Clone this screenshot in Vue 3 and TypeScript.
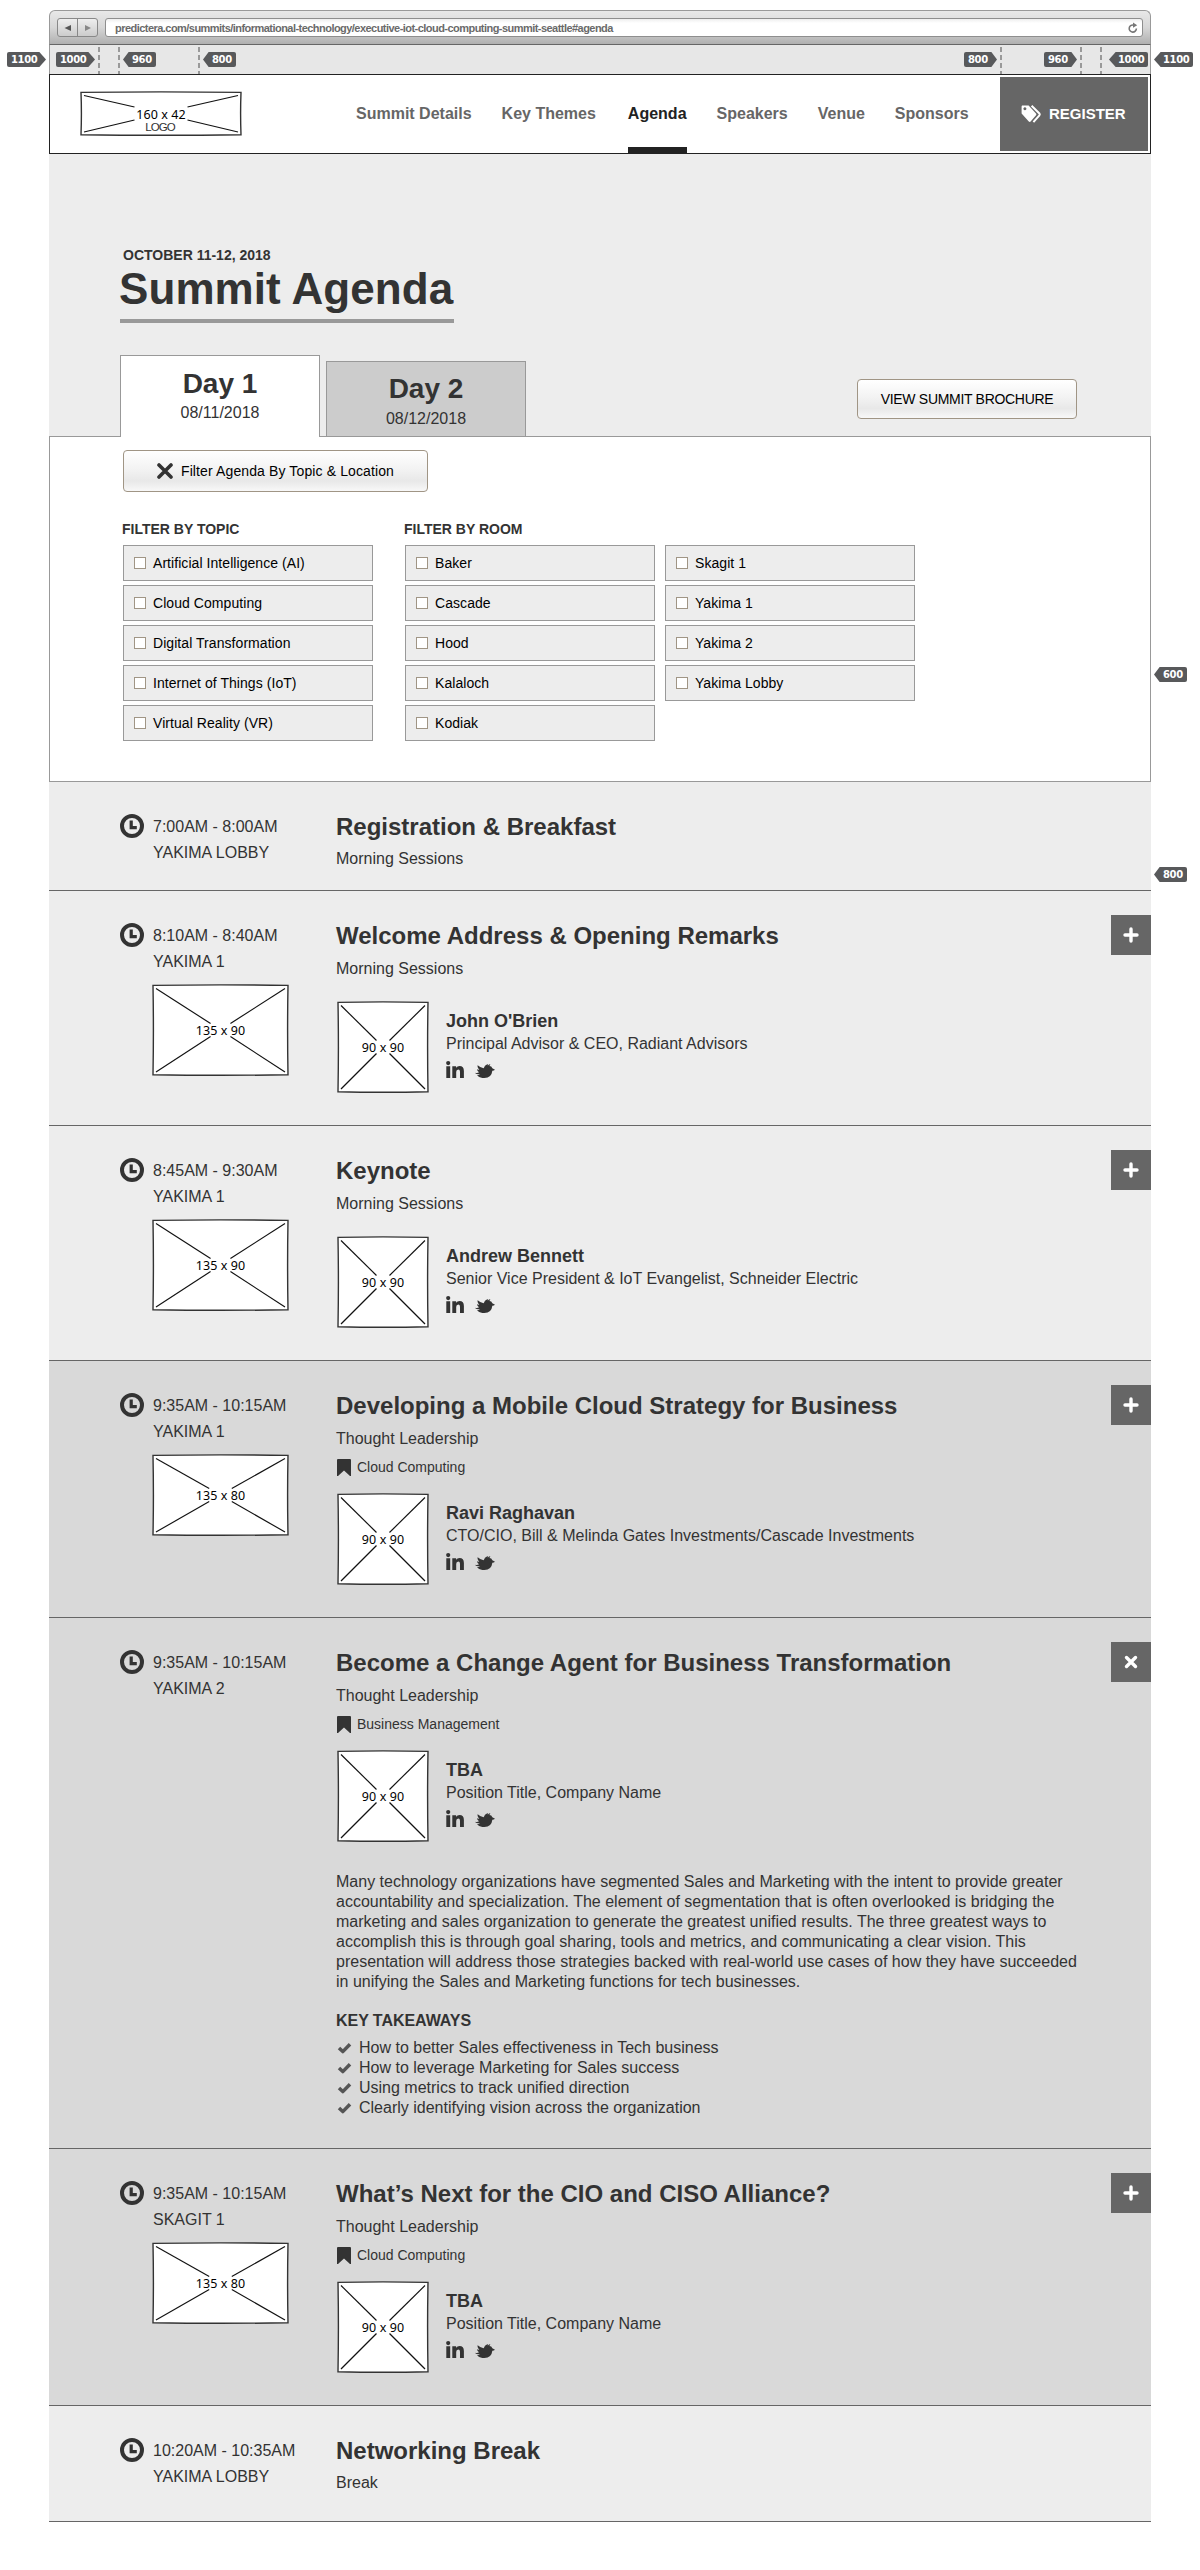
<script setup lang="ts">
import { h, type FunctionalComponent } from 'vue'

interface Speaker {
  name: string
  role: string
}
interface Session {
  time: string
  room: string
  title: string
  track: string
  topic?: string
  image?: { h: number; label: string }
  speaker?: Speaker
  toggle?: 'plus' | 'close'
  shaded?: boolean
  height: number
  body?: string[]
  takeaways?: string[]
}

const nav = ['Summit Details', 'Key Themes', 'Agenda', 'Speakers', 'Venue', 'Sponsors']

const topics = [
  'Artificial Intelligence (AI)',
  'Cloud Computing',
  'Digital Transformation',
  'Internet of Things (IoT)',
  'Virtual Reality (VR)',
]
const roomsA = ['Baker', 'Cascade', 'Hood', 'Kalaloch', 'Kodiak']
const roomsB = ['Skagit 1', 'Yakima 1', 'Yakima 2', 'Yakima Lobby']

const sessions: Session[] = [
  { time: '7:00AM - 8:00AM', room: 'YAKIMA LOBBY', title: 'Registration & Breakfast', track: 'Morning Sessions', height: 109 },
  {
    time: '8:10AM - 8:40AM', room: 'YAKIMA 1', title: 'Welcome Address & Opening Remarks', track: 'Morning Sessions',
    image: { h: 92, label: '135 x 90' },
    speaker: { name: "John O'Brien", role: 'Principal Advisor & CEO, Radiant Advisors' },
    toggle: 'plus', height: 235,
  },
  {
    time: '8:45AM - 9:30AM', room: 'YAKIMA 1', title: 'Keynote', track: 'Morning Sessions',
    image: { h: 92, label: '135 x 90' },
    speaker: { name: 'Andrew Bennett', role: 'Senior Vice President & IoT Evangelist, Schneider Electric' },
    toggle: 'plus', height: 235,
  },
  {
    time: '9:35AM - 10:15AM', room: 'YAKIMA 1', title: 'Developing a Mobile Cloud Strategy for Business', track: 'Thought Leadership',
    topic: 'Cloud Computing', image: { h: 82, label: '135 x 80' },
    speaker: { name: 'Ravi Raghavan', role: 'CTO/CIO, Bill & Melinda Gates Investments/Cascade Investments' },
    toggle: 'plus', shaded: true, height: 257,
  },
  {
    time: '9:35AM - 10:15AM', room: 'YAKIMA 2', title: 'Become a Change Agent for Business Transformation', track: 'Thought Leadership',
    topic: 'Business Management',
    speaker: { name: 'TBA', role: 'Position Title, Company Name' },
    toggle: 'close', shaded: true, height: 531,
    body: [
      'Many technology organizations have segmented Sales and Marketing with the intent to provide greater',
      'accountability and specialization. The element of segmentation that is often overlooked is bridging the',
      'marketing and sales organization to generate the greatest unified results. The three greatest ways to',
      'accomplish this is through goal sharing, tools and metrics, and communicating a clear vision. This',
      'presentation will address those strategies backed with real-world use cases of how they have succeeded',
      'in unifying the Sales and Marketing functions for tech businesses.',
    ],
    takeaways: [
      'How to better Sales effectiveness in Tech business',
      'How to leverage Marketing for Sales success',
      'Using metrics to track unified direction',
      'Clearly identifying vision across the organization',
    ],
  },
  {
    time: '9:35AM - 10:15AM', room: 'SKAGIT 1', title: 'What’s Next for the CIO and CISO Alliance?', track: 'Thought Leadership',
    topic: 'Cloud Computing', image: { h: 82, label: '135 x 80' },
    speaker: { name: 'TBA', role: 'Position Title, Company Name' },
    toggle: 'plus', shaded: true, height: 257,
  },
  { time: '10:20AM - 10:35AM', room: 'YAKIMA LOBBY', title: 'Networking Break', track: 'Break', height: 116 },
]

/* breakpoint markers: x/y of the tag and the side its arrow is on */
const markers = [
  { x: 7, y: 52, t: '1100', side: 'r' },
  { x: 56, y: 52, t: '1000', side: 'r' },
  { x: 123, y: 52, t: '960', side: 'l' },
  { x: 203, y: 52, t: '800', side: 'l' },
  { x: 964, y: 52, t: '800', side: 'r' },
  { x: 1044, y: 52, t: '960', side: 'r' },
  { x: 1109, y: 52, t: '1000', side: 'l' },
  { x: 1154, y: 52, t: '1100', side: 'l' },
  { x: 1154, y: 667, t: '600', side: 'l' },
  { x: 1154, y: 867, t: '800', side: 'l' },
]
const guides = [98, 118, 198, 1000, 1080, 1100]

/* crossed box with hand-drawn edges and a size caption */
const Placeholder: FunctionalComponent<{ w: number; h: number; label: string; caption?: string }> = (p) => {
  const { w, h: ht, label, caption } = p
  const cx = w / 2
  const cy = ht / 2
  const gap = 6.5
  const dx = (cx - 3.5) * (gap / (cy - 3.5))
  const seg = (x1: number, y1: number, x2: number, y2: number) =>
    h('path', { d: `M${x1} ${y1}L${x2} ${y2}`, stroke: '#111', 'stroke-width': 1.15 })
  return h('svg', { width: w, height: ht, viewBox: `0 0 ${w} ${ht}`, style: 'display:block' }, [
    h('path', {
      d: `M1 1.4Q${cx} .3 ${w - 1} 1.4Q${w - 1.8} ${cy} ${w - 1} ${ht - 1.2}Q${cx} ${ht - 0.2} 1 ${ht - 1.2}Q1.8 ${cy} 1 1.4Z`,
      fill: '#fff', stroke: '#333', 'stroke-width': 1.4,
    }),
    seg(4, 4.5, cx - dx, cy - gap),
    seg(w - 4, 4.5, cx + dx, cy - gap),
    seg(4, ht - 4, cx - dx, cy + gap),
    seg(w - 4, ht - 4, cx + dx, cy + gap),
    h('text', {
      x: cx, y: cy + 5, 'text-anchor': 'middle', 'font-family': "'Noto Sans', sans-serif", 'font-size': 12.5,
      'letter-spacing': 0.1, fill: '#000',
    }, label),
    caption
      ? h('text', {
          x: cx - 1, y: 40, 'text-anchor': 'middle', 'font-family': "'Liberation Sans', Arial, sans-serif",
          'font-size': 11.5, 'letter-spacing': -0.9, fill: '#333',
        }, caption)
      : null,
  ])
}
</script>

<template>
  <div class="page">
    <div class="window">
      <div class="chrome">
        <div class="arrows">
          <span><svg width="8" height="8" viewBox="0 0 8 8"><path d="M.5 4L7 1v6z" fill="#555" /></svg></span>
          <span><svg width="8" height="8" viewBox="0 0 8 8"><path d="M7 4L1 1v6z" fill="#888" /></svg></span>
        </div>
        <div class="url">
          <span class="address">predictera.com/summits/informational-technology/executive-iot-cloud-computing-summit-seattle#agenda</span>
          <svg width="10" height="12" viewBox="0 0 10 12">
            <path d="M8.4 6.6A3.6 3.6 0 1 1 5.4 3" fill="none" stroke="#777" stroke-width="1.6" />
            <path d="M5 .4L9.2 3.2 5 5.8z" fill="#777" />
          </svg>
        </div>
      </div>
      <div class="strip"></div>

      <header class="header">
        <Placeholder class="logo" :w="162" :h="45" label="160 x 42" caption="LOGO" />
        <nav>
          <a v-for="n in nav" :key="n" :class="{ on: n === 'Agenda' }">{{ n }}</a>
        </nav>
        <div class="register">
          <svg width="21" height="18" viewBox="0 0 21 18">
            <path fill-rule="evenodd" fill="#fff" d="M1 .6h6.6L15 8.4q.8.9 0 1.8l-5.4 6.4q-.9.9-1.8 0L.6 8.6V1.4zM3.9 2.3a1.5 1.5 0 1 0 .01 0z" />
            <path d="M10.6.8l7.8 7.7q.8.9 0 1.8L12.4 17.2" fill="none" stroke="#fff" stroke-width="2" />
          </svg>
          <span>REGISTER</span>
        </div>
      </header>

      <section class="hero">
        <div class="date">OCTOBER 11-12, 2018</div>
        <h1>Summit Agenda</h1>
        <div class="tabrow">
          <div class="tab active"><b>Day 1</b><span>08/11/2018</span></div>
          <div class="tab"><b>Day 2</b><span>08/12/2018</span></div>
          <button class="btn brochure">VIEW SUMMIT BROCHURE</button>
        </div>
      </section>

      <section class="filters">
        <button class="btn toggle-filter">
          <svg width="16" height="16" viewBox="0 0 16 16"><path d="M2 2l12 12M14 2L2 14" stroke="#333" stroke-width="3.6" stroke-linecap="round" /></svg>
          Filter Agenda By Topic &amp; Location
        </button>
        <div class="groups">
          <div class="group">
            <h3>FILTER BY TOPIC</h3>
            <div class="cols">
              <div class="col">
                <label v-for="t in topics" :key="t" class="opt"><i></i>{{ t }}</label>
              </div>
            </div>
          </div>
          <div class="group">
            <h3>FILTER BY ROOM</h3>
            <div class="cols">
              <div class="col">
                <label v-for="t in roomsA" :key="t" class="opt"><i></i>{{ t }}</label>
              </div>
              <div class="col">
                <label v-for="t in roomsB" :key="t" class="opt"><i></i>{{ t }}</label>
              </div>
            </div>
          </div>
        </div>
      </section>

      <article
        v-for="(s, i) in sessions"
        :key="i"
        class="session"
        :class="{ shaded: s.shaded, plain: !s.speaker }"
        :style="{ height: s.height + 'px' }"
      >
        <div class="when">
          <svg width="24" height="24" viewBox="0 0 24 24">
            <circle cx="12" cy="12" r="10" fill="none" stroke="#333" stroke-width="4" />
            <path d="M11.2 6.5v7.2h5.6" fill="none" stroke="#333" stroke-width="3.2" />
          </svg>
          <div class="slot">
            <div>{{ s.time }}</div>
            <div>{{ s.room }}</div>
            <Placeholder v-if="s.image" class="room-img" :w="137" :h="s.image.h" :label="s.image.label" />
          </div>
        </div>
        <div class="what">
          <h2>{{ s.title }}</h2>
          <div class="track">{{ s.track }}</div>
          <div v-if="s.topic" class="topic">
            <svg width="14" height="17" viewBox="0 0 14 17"><path d="M1 0h12q1 0 1 1v16h-1L7 11.4 1 17H0V1q0-1 1-1z" fill="#333" /></svg>
            {{ s.topic }}
          </div>
          <div v-if="s.speaker" class="speaker">
            <Placeholder :w="92" :h="92" label="90 x 90" />
            <div class="who">
              <b>{{ s.speaker.name }}</b>
              <span>{{ s.speaker.role }}</span>
              <div class="social">
                <svg width="18" height="17" viewBox="0 0 18 17">
                  <circle cx="2.2" cy="2.1" r="2.1" fill="#333" />
                  <path d="M.3 5.2h3.9V17H.3zM6.3 5.2h3.8v1.5q1.2-1.8 3.4-1.8 4.4 0 4.4 5V17h-3.9v-6.2q0-2.4-1.7-2.4-2.1 0-2.1 2.6v6H6.3z" fill="#333" />
                </svg>
                <svg width="20" height="14" viewBox="0 0 60 42">
                  <path fill="#333" d="M0 26q7 2 12-1Q6 21 6 16q4 2 7 1Q6 11 8 4q9 8 18 9Q28 4 38 0q1 3 0 5 4-4 8-4-1 3-3 5 7 0 9 7l8 4q-3 3-8 3-2 21-24 22-16 1-22-8 6 0 9-3-12 0-15-5z" />
                </svg>
              </div>
            </div>
          </div>
          <p v-if="s.body" class="body"><span v-for="l in s.body" :key="l">{{ l }}</span></p>
          <template v-if="s.takeaways">
            <h4>KEY TAKEAWAYS</h4>
            <ul>
              <li v-for="t in s.takeaways" :key="t">
                <svg width="15" height="12" viewBox="0 0 15 12"><path d="M2 6l3.8 3.6L13 2.2" fill="none" stroke="#555" stroke-width="3.5" stroke-linejoin="round" /></svg>
                {{ t }}
              </li>
            </ul>
          </template>
        </div>
        <button v-if="s.toggle" class="expand">
          <svg v-if="s.toggle === 'plus'" width="16" height="16" viewBox="0 0 16 16"><path d="M8 2v12M2 8h12" stroke="#fff" stroke-width="3.4" stroke-linecap="round" /></svg>
          <svg v-else width="16" height="16" viewBox="0 0 16 16"><path d="M3.5 3.5l9 9M12.5 3.5l-9 9" stroke="#fff" stroke-width="3.4" stroke-linecap="round" /></svg>
        </button>
      </article>
    </div>

    <span v-for="g in guides" :key="g" class="guide" :style="{ left: g + 'px' }"></span>
    <span
      v-for="(m, i) in markers"
      :key="'m' + i"
      class="marker"
      :class="[m.side, { wide: m.t.length > 3 }]"
      :style="{ left: m.x + 'px', top: m.y + 'px' }"
    >{{ m.t }}</span>
  </div>
</template>

<style>
body {
  background: #fff;
}
</style>

<style scoped>
* {
  box-sizing: border-box;
}
.page {
  position: relative;
  width: 1200px;
  height: 2570px;
  padding: 10px 0 0 49px;
  overflow: hidden;
  font-family: 'Liberation Sans', Arial, sans-serif;
  font-size: 16px;
  color: #333;
}
.window {
  width: 1102px;
}
.chrome {
  display: flex;
  height: 35px;
  padding: 7px 7px 0;
  border: 1px solid #999;
  border-bottom-color: #666;
  border-radius: 6px 6px 0 0;
  background: linear-gradient(#e8e8e8, #d6d6d6 50%, #b0b0b0);
}
.arrows {
  display: flex;
  width: 41px;
  height: 19px;
  border: 1px solid #888;
  border-radius: 3px;
  background: linear-gradient(#eee, #ccc);
}
.arrows span {
  flex: 1;
  display: flex;
  align-items: center;
  justify-content: center;
}
.arrows span + span {
  border-left: 1px solid #888;
}
.url {
  display: flex;
  flex: 1;
  align-items: center;
  justify-content: space-between;
  height: 19px;
  margin-left: 7px;
  padding: 0 4px 0 9px;
  border: 1px solid #8e8e8e;
  border-radius: 3px;
  background: linear-gradient(#eee, #fff 4px);
}
.address {
  padding-top: 1px;
  font-size: 11px;
  font-weight: 700;
  line-height: 17px;
  letter-spacing: -0.54px;
  color: #6a6a6a;
  white-space: nowrap;
}
.strip {
  height: 29px;
  border: solid #999;
  border-width: 0 1px;
  background: #e7e7e7;
}
.header {
  display: flex;
  height: 80px;
  border: 1px solid #222;
  background: #fff;
}
.logo {
  margin: 16px 0 0 30px;
}
nav {
  display: flex;
  margin-left: 114px;
  gap: 30px;
}
nav a {
  display: flex;
  align-items: center;
  height: 78px;
  border-top: 6px solid transparent;
  border-bottom: 6px solid transparent;
  font-weight: 700;
  color: #666;
  white-space: nowrap;
}
nav a.on {
  margin-left: 2px;
  border-bottom-color: #222;
  color: #222;
}
.register {
  display: flex;
  align-items: center;
  gap: 7px;
  width: 148px;
  height: 74px;
  margin: 2px 2px 0 auto;
  padding-left: 21px;
  background: #666;
  color: #fff;
  font-size: 15px;
  font-weight: 700;
}
.register span {
  margin-top: -2px;
}
.hero {
  height: 282px;
  padding: 93px 0 0 71px;
  background: #ededed;
}
.date {
  padding-left: 3px;
  font-size: 14px;
  font-weight: 700;
  line-height: 16px;
}
h1 {
  width: 334px;
  height: 60px;
  margin: 0;
  border-bottom: 4px solid #999;
  font-size: 44px;
  line-height: 50px;
  padding-top: 1px;
  text-indent: -1px;
  letter-spacing: 0.08px;
  white-space: nowrap;
}
.tabrow {
  display: flex;
  align-items: flex-end;
  margin-top: 32px;
}
.tab {
  display: flex;
  flex-direction: column;
  align-items: center;
  width: 200px;
  height: 75px;
  margin-left: 6px;
  padding-top: 11px;
  border: 1px solid #999;
  border-bottom: 0;
  background: #ccc;
}
.tab.active {
  position: relative;
  height: 82px;
  margin: 0 0 -1px;
  padding-top: 12px;
  background: #fff;
}
.tab b {
  font-size: 28px;
  line-height: 32px;
}
.tab span {
  line-height: 20px;
  margin-top: 4px;
}
.tab.active span {
  margin-top: 3px;
}
.btn {
  display: flex;
  align-items: center;
  justify-content: center;
  border: 1px solid #a09585;
  border-radius: 4px;
  background: linear-gradient(#fff, #f3f3f3 45%, #e8e8e8 75%, #f8f8f8);
  font-family: inherit;
  font-size: 14px;
  color: #000;
  white-space: nowrap;
  padding: 0;
}
.brochure {
  width: 220px;
  height: 40px;
  margin: 0 0 17px 331px;
  font-size: 14px;
  letter-spacing: -0.3px;
}
.toggle-filter {
  width: 305px;
  height: 42px;
  gap: 8px;
  letter-spacing: 0.12px;
}
.filters {
  height: 346px;
  padding: 13px 0 0 73px;
  border: 1px solid #999;
  background: #fff;
}
.groups {
  display: flex;
  gap: 32px;
  margin-top: 28px;
}
h3 {
  margin: 0;
  height: 25px;
  font-size: 14px;
  line-height: 18px;
  text-indent: -1px;
}
.cols {
  display: flex;
  gap: 10px;
}
.col {
  display: flex;
  flex-direction: column;
  gap: 4px;
}
.opt {
  display: flex;
  align-items: center;
  width: 250px;
  height: 36px;
  padding-left: 10px;
  border: 1px solid #999;
  background: #ededed;
  font-size: 14px;
  letter-spacing: 0.06px;
  color: #000;
}
.opt i {
  width: 12px;
  height: 12px;
  margin-right: 7px;
  border: 1px solid #a09585;
  background: #fff;
}
.session {
  display: flex;
  position: relative;
  padding-left: 71px;
  border-bottom: 1px solid #666;
  background: #ededed;
}
.session.shaded {
  background: #d9d9d9;
}
.when {
  display: flex;
  width: 216px;
  padding-top: 32px;
}
.slot {
  margin-left: 9px;
  line-height: 26px;
  white-space: nowrap;
}
.room-img {
  margin: 9px 0 0 -1px;
}
.what {
  padding-top: 30px;
}
h2 {
  margin: 0;
  font-size: 24px;
  line-height: 30px;
  white-space: nowrap;
}
.track {
  margin: 8px 0 -1px;
  line-height: 20px;
}
.plain .track {
  margin-top: 7px;
}
.topic {
  display: flex;
  gap: 6px;
  margin: 11px 0 -6px 1px;
  padding-top: 0;
  font-size: 14px;
  line-height: 17px;
}
.speaker {
  display: flex;
  margin: 23px 0 0 1px;
}
.who {
  display: flex;
  flex-direction: column;
  margin-left: 17px;
  padding-top: 9px;
  white-space: nowrap;
}
.who b {
  font-size: 18px;
  line-height: 22px;
}
.who span {
  margin-top: 2px;
  line-height: 20px;
}
.social {
  display: flex;
  align-items: flex-end;
  gap: 11px;
  margin-top: 7px;
}
.body {
  margin: 30px 0 0;
  line-height: 20px;
}
.body span {
  display: block;
  white-space: nowrap;
}
h4 {
  margin: 19px 0 7px;
  font-size: 16px;
  line-height: 20px;
  letter-spacing: -0.05px;
}
ul {
  margin: 0;
  padding: 0;
  list-style: none;
}
li {
  display: flex;
  align-items: center;
  gap: 7px;
  padding-left: 1px;
  line-height: 20px;
}
.expand {
  display: flex;
  position: absolute;
  top: 24px;
  right: 0;
  align-items: center;
  justify-content: center;
  width: 40px;
  height: 40px;
  padding: 0;
  border: 0;
  background: #666;
}
.guide {
  position: absolute;
  top: 47px;
  width: 2px;
  height: 27px;
  background: repeating-linear-gradient(#999 0 5px, transparent 5px 8px);
}
.marker {
  position: absolute;
  width: 33px;
  height: 15px;
  border-radius: 2px;
  background: #58595b;
  color: #fff;
  font: 700 10px/15px 'DejaVu Sans', sans-serif;
  letter-spacing: -0.35px;
}
.marker.wide {
  width: 39px;
}
.marker.r {
  padding-left: 4px;
  clip-path: polygon(0 0, 83% 0, 100% 50%, 83% 100%, 0 100%);
}
.marker.l {
  padding-left: 9px;
  clip-path: polygon(17% 0, 100% 0, 100% 100%, 17% 100%, 0 50%);
}
</style>
